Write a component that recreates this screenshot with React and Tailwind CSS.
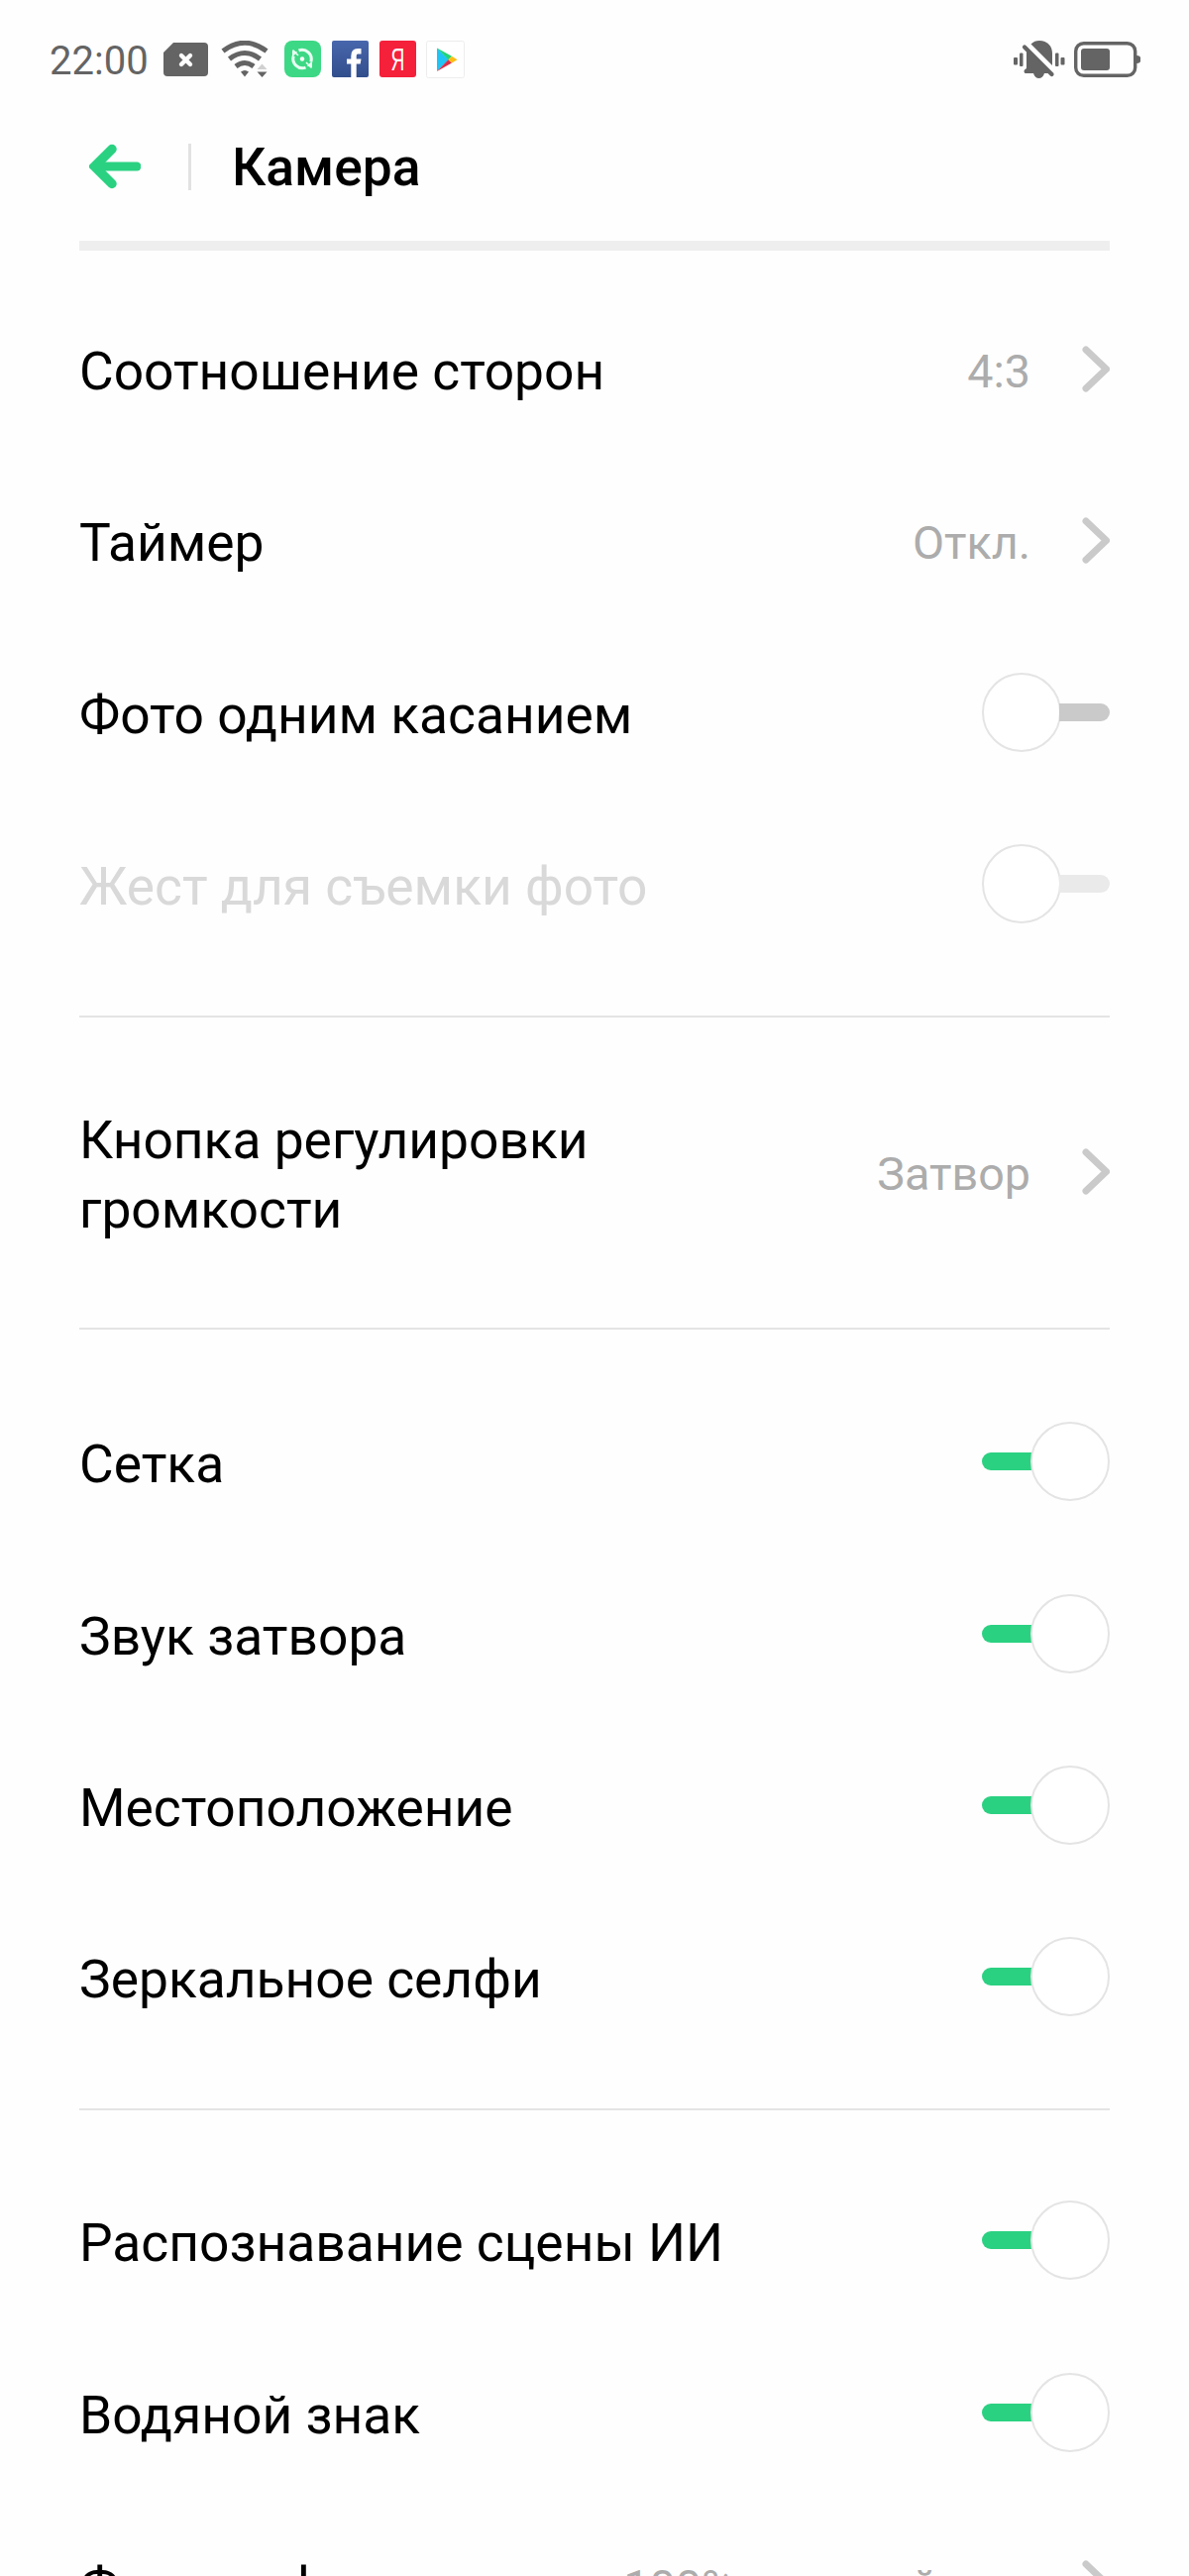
const SECTIONS = [
    {
        id: 'shooting',
        className: 'pt-[35.5px] pb-[43.2px]',
        items: [
            { label: 'Соотношение сторон', value: '4:3' },
            { label: 'Таймер', value: 'Откл.' },
            { label: 'Фото одним касанием', toggle: true, on: false },
            { label: 'Жест для съемки фото', toggle: true, on: false, disabled: true },
        ],
    },
    {
        id: 'volume',
        className: 'pt-[72px] pb-[68px]',
        items: [{ label: 'Кнопка регулировки громкости', value: 'Затвор' }],
    },
    {
        id: 'general',
        className: 'pt-[49.5px] pb-[42.4px]',
        items: [
            { label: 'Сетка', toggle: true, on: true },
            { label: 'Звук затвора', toggle: true, on: true },
            { label: 'Местоположение', toggle: true, on: true },
            { label: 'Зеркальное селфи', toggle: true, on: true },
        ],
    },
    {
        id: 'extra',
        className: 'pt-[48px]',
        items: [
            { label: 'Распознавание сцены ИИ', toggle: true, on: true },
            { label: 'Водяной знак', toggle: true, on: true },
            { label: 'Фотография', value: '100% высокий вид' },
        ],
    },
];

function SimIcon() {
    return (
        <svg className="ml-[15px] h-[34px] w-[45px]" viewBox="0 0 45 34">
            <path d="M10 0H41a4 4 0 0 1 4 4V30a4 4 0 0 1-4 4H4a4 4 0 0 1-4-4V10Z" fill="#646464" />
            <path d="M18 13l9 9M27 13l-9 9" stroke="#fff" strokeWidth="4.4" strokeLinecap="round" />
        </svg>
    );
}

function WifiIcon() {
    return (
        <svg className="ml-[13px] h-[37px] w-[48px]" viewBox="0 0 48 37" fill="none" stroke="#646464">
            <path d="M2 10.5Q24 -6 46 10.5" strokeWidth="5" />
            <path d="M8.5 18.5Q24 6.5 39.5 18.5" strokeWidth="5" />
            <path d="M15 26Q24 19 33 26" strokeWidth="5" />
            <path d="M20 31.5Q24 28.5 28 31.5L24 36.5Z" fill="#646464" stroke="none" />
            <path d="M36.5 29L41.500 23.5L46.5 29Z" fill="#d0d0d0" stroke="none" />
            <path d="M36.5 31.5H46.5L41.5 37Z" fill="#646464" stroke="none" />
        </svg>
    );
}

function SyncAppIcon() {
    return (
        <svg className="ml-[16px] h-[37px] w-[37px]" viewBox="0 0 37 37" fill="none">
            <rect width="37" height="37" rx="8" fill="#3dd885" />
            <path d="M14.5 9.8A9.500 9.500 0 0 1 26.8 21.500" stroke="#e9fff3" strokeWidth="3" />
            <path d="M21.500 27.2A9.500 9.500 0 0 1 9.200 15.500" stroke="#e9fff3" strokeWidth="3" />
            <path d="M8.500 9.500L14 15M22 22L27.500 27.500" stroke="#e9fff3" strokeWidth="1.6" />
            <path d="M22.800 25.500L28 20.500V27Z" fill="#e9fff3" />
            <path d="M13.200 11.500L8 16.500V10Z" fill="#e9fff3" />
            <circle cx="18" cy="18.500" r="2.2" fill="#fff" />
        </svg>
    );
}

function FacebookIcon() {
    return (
        <svg className="ml-[11px] h-[37px] w-[37px]" viewBox="0 0 37 37">
            <defs>
                <linearGradient id="fb" x1="0" y1="0" x2="0" y2="1">
                    <stop offset="0" stopColor="#4866ac" />
                    <stop offset="1" stopColor="#314e8c" />
                </linearGradient>
            </defs>
            <rect width="37" height="37" rx="2" fill="url(#fb)" />
            <path d="M22 37V15.5Q22 10.700 26 10.700H29.5" stroke="#fff" strokeWidth="5.4" fill="none" />
            <path d="M15 18.500h14.5l-.8 5H15z" fill="#fff" />
        </svg>
    );
}

function PlayIcon() {
    return (
        <svg className="ml-[10px] h-[38px] w-[39px]" viewBox="0 0 39 38">
            <rect x=".5" y=".5" width="38" height="37" rx="2" fill="#fff" stroke="#ededed" />
            <path d="M11 7.5V31L23 19.2Z" fill="#20c4f4" />
            <path d="M11 7.5L26 15.8L22.5 19.2Z" fill="#22d477" />
            <path d="M11 31L26 22.6L22.5 19.2Z" fill="#dd2c45" />
            <path d="M26 15.8L31.5 19.2L26 22.6L22.5 19.2Z" fill="#fdbd14" />
        </svg>
    );
}

function MutedBellIcon() {
    return (
        <svg className="h-[38px] w-[52px]" viewBox="0 0 52 38" fill="#646464">
            <rect x="0" y="17" width="4" height="7.5" rx="1" />
            <rect x="6" y="12.5" width="3.5" height="13.5" rx="1" />
            <rect x="42" y="12.5" width="3.5" height="13.5" rx="1" />
            <rect x="47.5" y="17" width="4" height="7.5" rx="1" />
            <path d="M17.500 3.500C20 1 22.500 0 26 0C34 0 39 5.5 39 13V25Z" />
            <path d="M11 6.5L38.5 34" stroke="#646464" strokeWidth="4.200" strokeLinecap="round" />
            <path d="M13 8.500L37 32.500V33H31C30 36.500 28 38 25.5 38S21 36.500 20 33H11.5Q9.500 31 11.500 29L13 28Z" />
        </svg>
    );
}

function BatteryIcon() {
    return (
        <svg className="ml-[9px] h-[36px] w-[67px]" viewBox="0 0 67 36">
            <rect x="1.7" y="1.7" width="60" height="32.6" rx="8" fill="none" stroke="#646464" strokeWidth="3.4" />
            <rect x="7" y="7" width="29" height="22" rx="3" fill="#646464" />
            <path d="M62 14h1.5a3.5 3.5 0 0 1 0 8H62z" fill="#646464" />
        </svg>
    );
}

function StatusBar() {
    return (
        <div className="flex h-[119px] items-center justify-between pr-[49px] pl-[50px]">
            <div className="flex items-center">
                <span className="relative top-[2px] text-[40px] leading-none text-[#646464]">22:00</span>
                <SimIcon />
                <WifiIcon />
                <SyncAppIcon />
                <FacebookIcon />
                <span className="ml-[11px] flex h-[37px] w-[37px] items-center justify-center rounded-[3px] bg-[#f5203a] font-['Liberation_Sans',sans-serif] text-[32px] leading-none text-white">
                    <span className="scale-x-[0.6]">Я</span>
                </span>
                <PlayIcon />
            </div>
            <div className="flex items-center">
                <MutedBellIcon />
                <BatteryIcon />
            </div>
        </div>
    );
}

function Header() {
    return (
        <header className="mx-20 flex h-[134px] items-center border-b-[10px] border-[#eeeeee] pb-[26px]">
            <svg className="ml-[10px] h-[46px] w-[52px]" viewBox="0 0 52 46" fill="none" stroke="#2ad181" strokeLinecap="round">
                <path d="M10 23H48" strokeWidth="9" />
                <path d="M23 5.5L5.5 23L23 40.5" strokeWidth="9.5" />
                <path d="M5 23L15 13V33Z" fill="#2ad181" stroke="none" />
            </svg>
            <div className="ml-[48px] h-[47px] w-[3px] bg-[#e2e2e2]" />
            <h1 className="ml-[41px] pt-[3px] text-[53.33px] leading-none font-medium text-black">Камера</h1>
        </header>
    );
}

function Chevron() {
    return (
        <svg className="relative -top-[3px] ml-[52px] h-[47px] w-[28px] shrink-0" viewBox="0 0 28 47" fill="none">
            <path d="M4 4L24.5 23.5L4 43" stroke="#cacaca" strokeWidth="7" strokeLinecap="round" strokeLinejoin="round" />
        </svg>
    );
}

function Toggle({ on, disabled }) {
    return (
        <div className={`relative -top-[3px] flex w-[129px] shrink-0 items-center ${on ? 'flex-row' : 'flex-row-reverse'}`}>
            <div className={`h-[18px] w-[51px] ${on ? 'rounded-l-full bg-[#2ad181]' : 'rounded-r-full'} ${!on && (disabled ? 'bg-[#eaeaea]' : 'bg-[#cacaca]')}`} />
            <div className="-mx-[2px] h-[80px] w-[80px] shrink-0 rounded-full border-2 border-[#e4e4e4] bg-white" />
        </div>
    );
}

function Row({ item }) {
    return (
        <div className="flex min-h-[173.33px] items-center justify-between">
            <span className={`text-[53.33px] leading-[70px] ${item.toggle ? '' : 'max-w-[540px]'} ${item.disabled ? 'text-[#d9d9d9]' : 'text-black'}`}>
                {item.label}
            </span>
            {item.toggle ? (
                <Toggle on={item.on} disabled={item.disabled} />
            ) : (
                <div className="flex items-center">
                    <span className="text-[46.67px] leading-none whitespace-nowrap text-[#acacac]">{item.value}</span>
                    <Chevron />
                </div>
            )}
        </div>
    );
}

function App() {
    return (
        <div className="h-[2600px] w-[1200px] overflow-hidden bg-[#fefefe] font-['Roboto',sans-serif]">
            <StatusBar />
            <Header />
            <main className="mx-20">
                {SECTIONS.map((section) => (
                    <section key={section.id} className={`border-b-2 border-[#e4e4e4] last:border-b-0 ${section.className}`}>
                        {section.items.map((item) => (
                            <Row key={item.label} item={item} />
                        ))}
                    </section>
                ))}
            </main>
        </div>
    );
}

export default App;
